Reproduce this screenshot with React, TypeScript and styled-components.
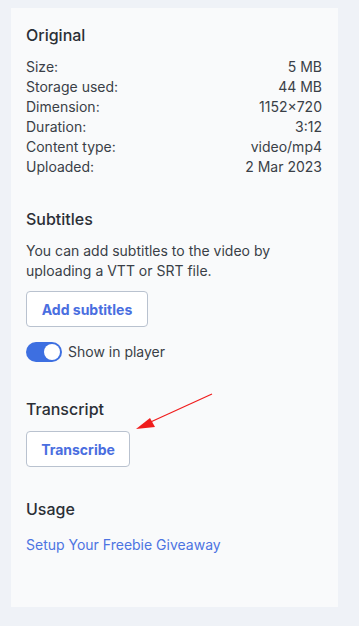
import { FC } from 'react';
import styled, { createGlobalStyle } from 'styled-components';

const GlobalStyle = createGlobalStyle`
  html, body {
    margin: 0;
    padding: 0;
    background: #eff2f7;
  }
  body {
    font-family: Inter, 'Noto Sans', sans-serif;
    color: #2b2f36;
  }
`;

const details: [string, string][] = [
  ['Size:', '5 MB'],
  ['Storage used:', '44 MB'],
  ['Dimension:', '1152×720'],
  ['Duration:', '3:12'],
  ['Content type:', 'video/mp4'],
  ['Uploaded:', '2 Mar 2023'],
];

const App: FC = () => {
  return (
    <>
      <GlobalStyle />
      <Page>
        <Card>
          <Section>
            <Heading>Original</Heading>
            <DetailList>
              {details.map(([label, value]) => (
                <DetailRow key={label}>
                  <span>{label}</span>
                  <span>{value}</span>
                </DetailRow>
              ))}
            </DetailList>
          </Section>

          <Section $space={32}>
            <Heading>Subtitles</Heading>
            <Text>You can add subtitles to the video by uploading a VTT or SRT file.</Text>
            <OutlineButton $width={122}>Add subtitles</OutlineButton>
            <ToggleRow>
              <Toggle $on>
                <Knob />
              </Toggle>
              <span>Show in player</span>
            </ToggleRow>
          </Section>

          <Section $space={37}>
            <Heading>Transcript</Heading>
            <ButtonWrap>
              <OutlineButton $width={104}>Transcribe</OutlineButton>
              {/* annotation arrow drawn on top of the screenshot */}
              <Arrow width="90" height="46" viewBox="0 0 90 46">
                <line x1="84" y1="3" x2="16" y2="34" stroke="#f01c1c" strokeWidth="1.2" />
                <polygon points="8,38 22,27 27,36" fill="#f01c1c" />
              </Arrow>
            </ButtonWrap>
          </Section>

          <Section $space={32}>
            <Heading>Usage</Heading>
            <Link>Setup Your Freebie Giveaway</Link>
          </Section>
        </Card>
      </Page>
    </>
  );
};

const Page = styled.div`
  padding: 8px 21px 20px 11px;
  min-height: 626px;
  box-sizing: border-box;
`;

const Card = styled.div`
  background: #f9fafb;
  padding: 17px 16px 52px 15px;
  display: flex;
  flex-direction: column;
`;

const Section = styled.div<{ $space?: number }>`
  display: flex;
  flex-direction: column;
  margin-top: ${({ $space }) => $space ?? 0}px;
`;

const Heading = styled.h2`
  margin: 0 0 12px;
  font-size: 16px;
  line-height: 20px;
  font-weight: 500;
  color: #2b2f36;
`;

const DetailList = styled.div`
  display: flex;
  flex-direction: column;
`;

const DetailRow = styled.div`
  display: flex;
  justify-content: space-between;
  font-size: 14px;
  line-height: 20px;
  color: #3a3f47;
`;

const Text = styled.p`
  margin: 0 0 10px;
  font-size: 14px;
  line-height: 20px;
  color: #3a3f47;
`;

const OutlineButton = styled.button<{ $width: number }>`
  width: ${({ $width }) => $width}px;
  height: 36px;
  padding: 0;
  background: #ffffff;
  border: 1px solid #b9c2cf;
  border-radius: 4px;
  font-family: Inter, 'Noto Sans', sans-serif;
  font-size: 14px;
  font-weight: 700;
  color: #4a6ee0;
  cursor: pointer;
`;

const ButtonWrap = styled.div`
  position: relative;
  align-self: flex-start;
`;

const Arrow = styled.svg`
  position: absolute;
  left: 102px;
  top: -40px;
  overflow: visible;
`;

const ToggleRow = styled.div`
  margin-top: 15px;
  display: flex;
  align-items: center;
  gap: 6px;
  font-size: 14px;
  line-height: 20px;
  color: #3a3f47;
`;

const Toggle = styled.div<{ $on?: boolean }>`
  width: 36px;
  height: 20px;
  border-radius: 10px;
  background: ${({ $on }) => ($on ? '#3d6fe1' : '#c9ced6')};
  display: flex;
  align-items: center;
  justify-content: ${({ $on }) => ($on ? 'flex-end' : 'flex-start')};
  padding: 0 2px;
  box-sizing: border-box;
`;

const Knob = styled.div`
  width: 16px;
  height: 16px;
  border-radius: 50%;
  background: #ffffff;
`;

const Link = styled.a`
  margin-top: 4px;
  font-size: 14px;
  line-height: 20px;
  color: #4d74e2;
  cursor: pointer;
`;

export default App;
